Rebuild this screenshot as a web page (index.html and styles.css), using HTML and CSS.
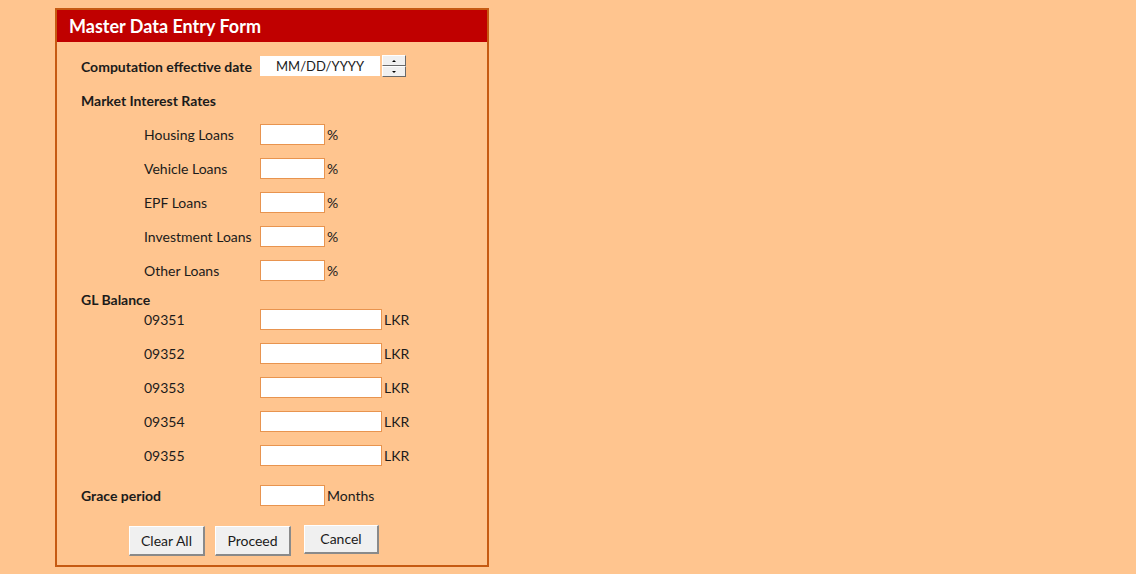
FILE: index.html
```html
<!DOCTYPE html>
<html>
<head>
<meta charset="utf-8">
<link rel="stylesheet" href="styles.css">
</head>
<body>
<div class="panel">
  <div class="title">Master Data Entry Form</div>
  <div class="content">
    <div class="row date-row">
      <div class="label bold w-main">Computation effective date</div>
      <div class="date-box">MM/DD/YYYY</div>
      <div class="spinner">
        <div class="spin-btn"><svg width="6" height="4" viewBox="0 0 6 4"><path d="M3 1 L5 3 L1 3 Z" fill="#000"/></svg></div>
        <div class="spin-btn"><svg width="6" height="4" viewBox="0 0 6 4"><path d="M1 1 L5 1 L3 3 Z" fill="#000"/></svg></div>
      </div>
    </div>
    <div class="row">
      <div class="label bold">Market Interest Rates</div>
    </div>
    <div class="row">
      <div class="label sub">Housing Loans</div>
      <div class="input short"></div><span class="unit">%</span>
    </div>
    <div class="row">
      <div class="label sub">Vehicle Loans</div>
      <div class="input short"></div><span class="unit">%</span>
    </div>
    <div class="row">
      <div class="label sub">EPF Loans</div>
      <div class="input short"></div><span class="unit">%</span>
    </div>
    <div class="row">
      <div class="label sub">Investment Loans</div>
      <div class="input short"></div><span class="unit">%</span>
    </div>
    <div class="row">
      <div class="label sub">Other Loans</div>
      <div class="input short"></div><span class="unit">%</span>
    </div>
    <div class="gl-head bold">GL Balance</div>
    <div class="row">
      <div class="label sub">09351</div>
      <div class="input long"></div><span class="unit">LKR</span>
    </div>
    <div class="row">
      <div class="label sub">09352</div>
      <div class="input long"></div><span class="unit">LKR</span>
    </div>
    <div class="row">
      <div class="label sub">09353</div>
      <div class="input long"></div><span class="unit">LKR</span>
    </div>
    <div class="row">
      <div class="label sub">09354</div>
      <div class="input long"></div><span class="unit">LKR</span>
    </div>
    <div class="row">
      <div class="label sub">09355</div>
      <div class="input long"></div><span class="unit">LKR</span>
    </div>
    <div class="row grace-row">
      <div class="label bold w-main">Grace period</div>
      <div class="input short"></div><span class="unit">Months</span>
    </div>
    <div class="buttons">
      <div class="btn btn-clear">Clear All</div>
      <div class="btn btn-proceed">Proceed</div>
      <div class="btn btn-cancel">Cancel</div>
    </div>
  </div>
</div>
</body>
</html>
```
FILE: styles.css
```css
html, body {
  margin: 0;
  padding: 0;
}
body {
  background: #FFC58F;
  font-family: Lato, "Open Sans", "Liberation Sans", sans-serif;
  font-size: 14px;
  color: #1b1b1b;
  width: 1136px;
  height: 574px;
  overflow: hidden;
}
.panel {
  box-sizing: border-box;
  margin: 8px 0 0 55px;
  width: 434px;
  height: 559px;
  border: 2px solid #C65A12;
  display: flex;
  flex-direction: column;
}
.title {
  height: 32px;
  background: #C00000;
  color: #fff;
  font-weight: bold;
  font-size: 18px;
  line-height: 32px;
  padding-left: 12px;
}
.content {
  padding: 7px 0 0 24px;
  display: flex;
  flex-direction: column;
}
.row {
  height: 34px;
  display: flex;
  align-items: center;
}
.bold {
  font-weight: bold;
}
.label {
  white-space: nowrap;
}
.w-main {
  width: 179px;
}
.sub {
  padding-left: 63px;
  width: 116px;
}
.date-box {
  width: 120px;
  height: 20px;
  background: #fff;
  text-align: center;
  font-size: 13px;
  line-height: 21px;
}
.spinner {
  margin-left: 2px;
  width: 24px;
  height: 22px;
  display: flex;
  flex-direction: column;
}
.spin-btn {
  box-sizing: border-box;
  flex: 1;
  background: #F0F0F0;
  border-top: 1px solid #fff;
  border-left: 1px solid #fff;
  border-right: 1px solid #696969;
  border-bottom: 1px solid #696969;
  display: flex;
  align-items: center;
  justify-content: center;
}
.input {
  box-sizing: border-box;
  height: 21px;
  background: #fff;
  border: 1px solid #E8944F;
}
.short {
  width: 65px;
}
.long {
  width: 122px;
}
.unit {
  margin-left: 2px;
}
.gl-head {
  height: 15px;
  line-height: 26px;
}
.grace-row {
  height: 46px;
}
.buttons {
  display: flex;
  align-items: flex-start;
  margin-top: 8px;
  padding-left: 48px;
}
.btn {
  box-sizing: border-box;
  height: 30px;
  width: 76px;
  background: #F0F0F0;
  border-top: 1px solid #fff;
  border-left: 1px solid #fff;
  border-right: 2px solid #8a8a8a;
  border-bottom: 2px solid #8a8a8a;
  text-align: center;
  line-height: 28px;
}
.btn-proceed {
  margin-left: 10px;
}
.btn-cancel {
  margin-left: 13px;
  margin-top: -1px;
  height: 29px;
  width: 75px;
  line-height: 26px;
}
```
